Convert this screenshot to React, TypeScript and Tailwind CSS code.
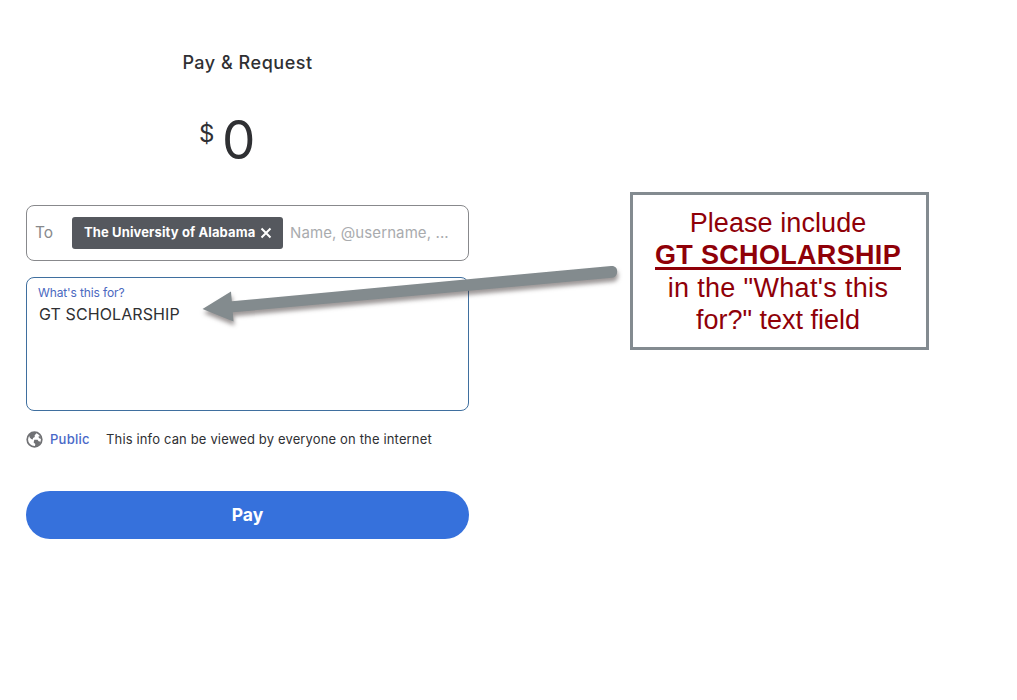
function GlobeIcon() {
  return (
    <svg width="17" height="17" viewBox="0 0 17 17" className="shrink-0">
      <circle cx="8.5" cy="8.5" r="7.3" fill="white" stroke="#707174" strokeWidth="1.7" />
      <path
        d="M3 4.2C4.5 2.2 6.6 1.2 9.6 1.3L10.2 2.6 8.6 4.4 8.8 6 7 7 6.8 8.4 5.2 8.1 3.7 6.6Z"
        fill="#707174"
      />
      <path
        d="M8.3 8.7 11.6 8.8 12.6 10.2 14.6 10.7C13.8 13.5 11.6 15.4 8.9 15.7L9.3 13.1 7.6 11.5Z"
        fill="#707174"
      />
      <path d="M12.2 5.7 14.1 5.1 15.4 7.8 13.6 7.6Z" fill="#707174" />
    </svg>
  );
}

function RecipientField() {
  return (
    <div className="flex h-14 items-center rounded-lg border border-[#88898c] pl-2 whitespace-nowrap">
      <span className="w-[37px] text-[15.5px] text-[#88898c]">To</span>
      <div className="flex h-8 w-[211px] shrink-0 items-center rounded-[3px] bg-[#55585e] pl-3 text-white">
        <span className="w-[176px] text-[13px] font-bold tracking-[0.12px]">
          The University of Alabama
        </span>
        <svg width="12" height="12" viewBox="0 0 12 12" fill="none">
          <path d="M1.5 1.5 10.5 10.5M10.5 1.5 1.5 10.5" stroke="currentColor" strokeWidth="2" />
        </svg>
      </div>
      <span className="ml-[7px] text-[15px] tracking-[0.1px] text-[#a9abae]">
        Name, @username, ...
      </span>
    </div>
  );
}

function NoteField() {
  return (
    <div className="mt-4 h-[134px] rounded-lg border border-[#3f6f9f] pt-[7px] pl-[11px] whitespace-nowrap">
      <div className="text-xs leading-4 tracking-[-0.13px] text-[#4a68c0]">What's this for?</div>
      <div className="mt-px pl-px text-base leading-6 tracking-[0.1px] text-[#2f3033]">
        GT SCHOLARSHIP
      </div>
    </div>
  );
}

function Callout() {
  return (
    <div className="mt-[192px] ml-[161px] flex h-[158px] w-[299px] flex-col items-center border-3 border-[#838b90] bg-white pt-3 pr-[3px] font-['Liberation_Sans',sans-serif] text-[27px] leading-[32.3px] whitespace-nowrap text-[#8f0008]">
      <span className="tracking-[0.08px]">Please include</span>
      <span className="font-bold tracking-[0.32px] underline decoration-[3px] underline-offset-[3px]">
        GT SCHOLARSHIP
      </span>
      <span className="tracking-[0.33px]">in the "What's this</span>
      <span>for?" text field</span>
    </div>
  );
}

function Arrow() {
  return (
    <svg
      className="pointer-events-none absolute top-[250px] left-[190px] drop-shadow-[1px_4px_2px_rgba(60,50,50,0.5)]"
      width="440"
      height="90"
      viewBox="190 250 440 90"
    >
      <path
        d="M202.5 309 231 291.5 231.8 301.3 611 266C615 265.6 617.2 268 617.2 271.3C617.2 275 615.5 277.5 612 277.8L232.8 312.3 233.5 321.5Z"
        fill="#838b8e"
      />
    </svg>
  );
}

export default function App() {
  return (
    <div className="relative flex h-[700px] w-[1017px] overflow-hidden bg-white font-['Inter',sans-serif] text-[#2f3033]">
      <main className="ml-[26px] w-[443px] shrink-0 pt-[49px]">
        <h1 className="text-center text-[18px] leading-7 font-medium tracking-[0.52px] whitespace-nowrap">
          Pay & Request
        </h1>
        <div className="mt-[33px] flex h-[95px] pl-[173px]">
          <span className="mt-2 w-[23px] text-[24px] leading-8">$</span>
          <span className="text-[53px] leading-[60px]">0</span>
        </div>
        <RecipientField />
        <NoteField />
        <div className="mt-[18px] flex h-5 items-center text-[13px] whitespace-nowrap">
          <GlobeIcon />
          <span className="mt-0.5 ml-[7px] w-14 font-medium tracking-[0.25px] text-[#4a68c8]">
            Public
          </span>
          <span className="mt-0.5 tracking-[0.15px]">
            This info can be viewed by everyone on the internet
          </span>
        </div>
        <button className="mt-[42px] flex h-12 w-full items-center justify-center rounded-full bg-[#3671dc] text-[17.5px] font-bold text-white">
          Pay
        </button>
      </main>
      <Callout />
      <Arrow />
    </div>
  );
}
